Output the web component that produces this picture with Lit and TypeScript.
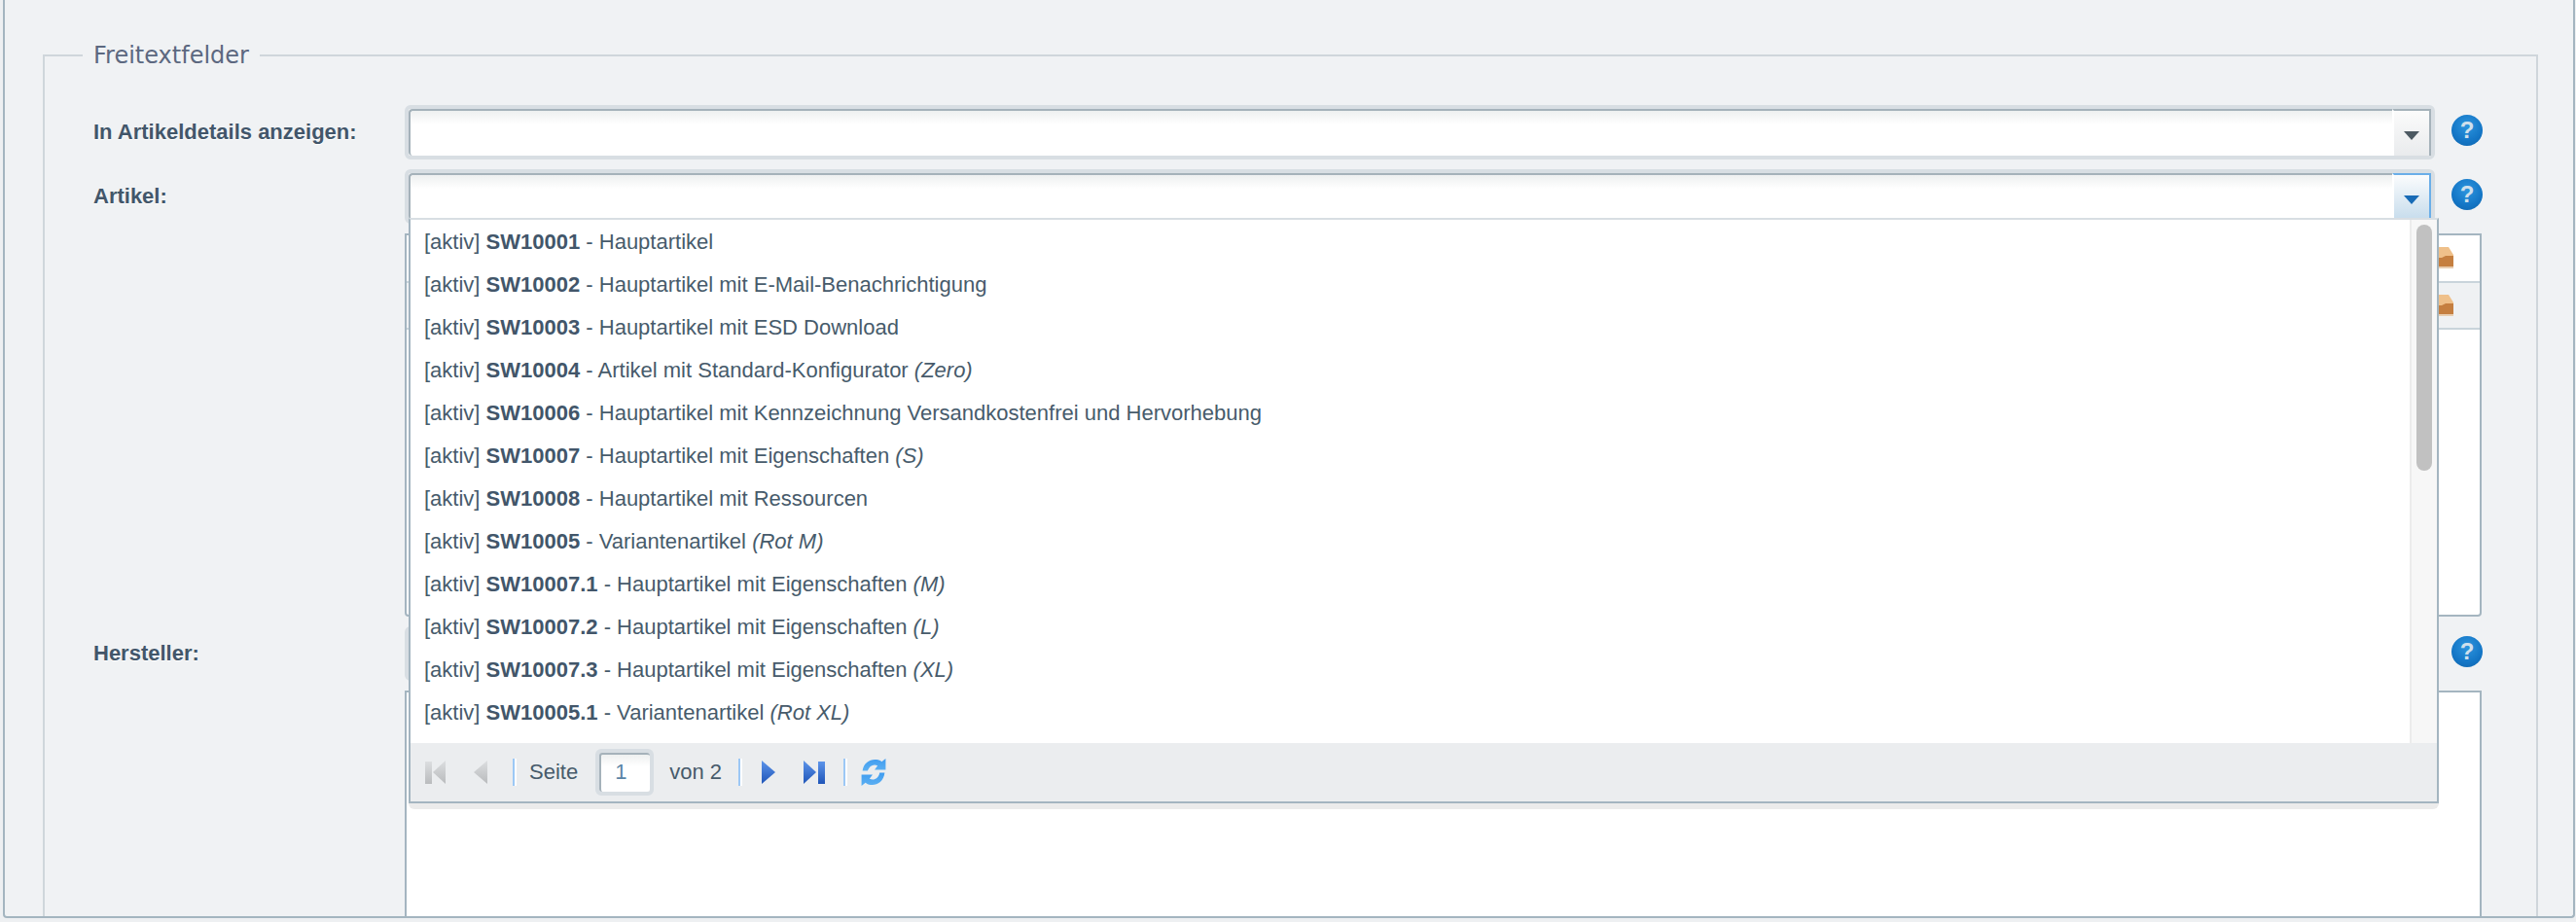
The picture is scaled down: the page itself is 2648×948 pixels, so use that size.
import { LitElement, html, css, svg } from "lit";
import { customElement } from "lit/decorators.js";

const items: [string, string, string?][] = [
  ["SW10001", "Hauptartikel"],
  ["SW10002", "Hauptartikel mit E-Mail-Benachrichtigung"],
  ["SW10003", "Hauptartikel mit ESD Download"],
  ["SW10004", "Artikel mit Standard-Konfigurator", "(Zero)"],
  ["SW10006", "Hauptartikel mit Kennzeichnung Versandkostenfrei und Hervorhebung"],
  ["SW10007", "Hauptartikel mit Eigenschaften", "(S)"],
  ["SW10008", "Hauptartikel mit Ressourcen"],
  ["SW10005", "Variantenartikel", "(Rot M)"],
  ["SW10007.1", "Hauptartikel mit Eigenschaften", "(M)"],
  ["SW10007.2", "Hauptartikel mit Eigenschaften", "(L)"],
  ["SW10007.3", "Hauptartikel mit Eigenschaften", "(XL)"],
  ["SW10005.1", "Variantenartikel", "(Rot XL)"],
];

const defs = svg`<defs>
  <linearGradient id="grey" x1="0" x2="0" y1="0" y2="1"><stop offset="0" stop-color="#dcdee0"/><stop offset="1" stop-color="#b9bbbd"/></linearGradient>
  <linearGradient id="blue" x1="0" x2="0" y1="0" y2="1"><stop offset="0" stop-color="#5c94ea"/><stop offset="1" stop-color="#1f55b8"/></linearGradient>
  <linearGradient id="sky" x1="0" x2="0" y1="0" y2="1"><stop offset="0" stop-color="#3f9cf0"/><stop offset="1" stop-color="#5cb0f2"/></linearGradient>
</defs>`;

@customElement("app-root")
export class AppRoot extends LitElement {
  static styles = css`
    :host {
      display: block;
      width: 2648px;
      height: 948px;
      background: #eef0f2;
      font-family: "Liberation Sans", Arial, sans-serif;
      font-size: 22px;
      color: #475b6b;
      overflow: hidden;
    }
    .panel {
      box-sizing: border-box;
      margin-left: 3px;
      width: 2644px;
      height: 944px;
      border: 2px solid #a4b5c0;
      border-top: 0;
      border-radius: 0 0 4px 4px;
      background: #f0f2f4;
      overflow: hidden;
    }
    fieldset {
      margin: 42px 36px 0 39px;
      padding: 36px 0 0 50px;
      border: 2px solid #cfd6db;
      min-width: 0;
    }
    legend {
      margin-left: -11px;
      padding: 0 11px;
      height: 30px;
      line-height: 30px;
      font-family: "DejaVu Sans", sans-serif;
      font-size: 24px;
      color: #5c6880;
    }
    .form {
      display: flex;
      flex-direction: column;
      gap: 10px;
    }
    .row {
      display: grid;
      grid-template-columns: 320px 2087px 32px;
      column-gap: 0;
      align-items: center;
    }
    .row label {
      font-weight: bold;
      color: #42566a;
      text-shadow: 0 1px 0 #fff;
      font-size: 22px;
    }
    .help {
      grid-column: 3;
      margin: 0 0 4px 17px;
      width: 32px;
      height: 32px;
      border-radius: 50%;
      background: radial-gradient(circle at 50% 35%, #2c95de 0%, #1476c6 60%, #0f64aa 100%);
      color: #cfe0ec;
      font-weight: bold;
      font-size: 24px;
      line-height: 32px;
      text-align: center;
    }
    .combo-wrap {
      position: relative;
      grid-column: 2;
    }
    .combo {
      box-sizing: border-box;
      height: 56px;
      border: 4px solid #d8dee3;
      border-radius: 6px;
      display: flex;
      background: #fff;
    }
    .combo .inner {
      flex: 1;
      border-top: 2px solid #a5b2ba;
      border-left: 2px solid #a5b2ba;
      border-radius: 4px 0 0 4px;
      background: linear-gradient(#eef0f0, #fff 14px);
    }
    .trigger {
      box-sizing: border-box;
      width: 40px;
      border-left: 2px solid #fff;
      border-top: 2px solid #a5b2ba;
      border-right: 2px solid #a5b2ba;
      background: linear-gradient(#fbfbfb, #e9ebed);
      display: flex;
      align-items: center;
      justify-content: center;
    }
    .trigger.active {
      border-top-color: #6aaee8;
      border-right-color: #6aaee8;
      background: linear-gradient(#fbfcfd, #c6dcec);
    }
    .arrow {
      width: 0;
      height: 0;
      border-left: 8px solid transparent;
      border-right: 8px solid transparent;
      border-top: 9px solid #4d5a63;
      margin-top: 4px;
    }
    .active .arrow {
      border-top-color: #186bb6;
    }
    .grid {
      grid-column: 2 / 4;
      box-sizing: border-box;
      border: 2px solid #a4b5c0;
      background: #fff;
      width: 2135px;
    }
    .grid.first {
      height: 394px;
      border-radius: 0 0 4px 4px;
    }
    .grid.second {
      height: 300px;
    }
    .grow {
      box-sizing: border-box;
      height: 49px;
      border-bottom: 2px solid #c9d4db;
      display: flex;
      align-items: center;
      justify-content: flex-end;
      padding-right: 27px;
    }
    .grow.alt {
      background: #eff1f3;
      height: 48px;
    }
    .drop {
      position: absolute;
      left: 4px;
      top: 50px;
      box-sizing: border-box;
      width: 2087px;
      height: 602px;
      border: 2px solid #a4b5c0;
      border-top: 2px solid #d8dee3;
      background: #fff;
      display: flex;
      flex-direction: column;
      z-index: 5;
    }
    .drop::after {
      content: "";
      position: absolute;
      left: -2px;
      right: -2px;
      bottom: -8px;
      height: 6px;
      background: #ebebeb;
      border-radius: 0 0 8px 8px;
    }
    .body {
      flex: 1;
      display: flex;
      min-height: 0;
    }
    .list {
      flex: 1;
      padding-top: 1px;
    }
    .item {
      height: 44px;
      line-height: 44px;
      padding-left: 14px;
      white-space: nowrap;
    }
    .item b { color: #42566a; }
    .bar {
      box-sizing: border-box;
      width: 28px;
      background: #f7f7f7;
      border-left: 2px solid #ececec;
      padding: 5px 5px 0 5px;
    }
    .thumb {
      width: 16px;
      height: 253px;
      border-radius: 8px;
      background: #c1c1c1;
    }
    .pager {
      box-sizing: border-box;
      height: 60px;
      background: #ebedef;
      display: flex;
      align-items: center;
      padding-left: 15px;
    }
    .pager svg { display: block; flex: none; }
    .sep {
      width: 2px;
      height: 28px;
      background: #9cc8f5;
      border-right: 2px solid #fff;
      flex: none;
    }
    .page {
      box-sizing: border-box;
      width: 60px;
      height: 48px;
      margin: 0 16px 0 18px;
      border: 4px solid #d8dee3;
      border-radius: 6px;
    }
    .page div {
      box-sizing: border-box;
      height: 100%;
      border-top: 2px solid #a5b2ba;
      border-left: 2px solid #a5b2ba;
      border-radius: 3px;
      background: linear-gradient(#eef0f0, #fff 12px);
      color: #5a84a6;
      padding-left: 14px;
      line-height: 36px;
    }
  `;

  private icon(w: number, h: number, body: unknown, ml: number, vb?: string) {
    return html`<svg style="margin-left:${ml}px" width=${w} height=${h} viewBox=${vb ?? `0 0 ${w} ${h}`}>${defs}${body}</svg>`;
  }

  private box() {
    return html`<svg width="28" height="23" viewBox="0 0 28 23">
      <path d="M4 12 L10 0 H23 L28 8 V12 Z" fill="#efc08a" />
      <path d="M0 20 V11 H16 L20 9 H28 V20 Z" fill="#c57f40" />
      <rect x="0" y="20" width="28" height="2" fill="#e8cdb0" />
    </svg>`;
  }

  private combo(active = false) {
    return html`<div class="combo">
      <div class="inner"></div>
      <div class="trigger ${active ? "active" : ""}"><div class="arrow"></div></div>
    </div>`;
  }

  private help() {
    return html`<div class="help">?</div>`;
  }

  render() {
    return html`<div class="panel">
      <fieldset>
        <legend>Freitextfelder</legend>
        <div class="form">
          <div class="row">
            <label>In Artikeldetails anzeigen:</label>
            <div class="combo-wrap">${this.combo()}</div>
            ${this.help()}
          </div>
          <div class="row">
            <label>Artikel:</label>
            <div class="combo-wrap">
              ${this.combo(true)}
              <div class="drop">
                <div class="body">
                  <div class="list">
                    ${items.map(
                      ([sku, name, opt]) => html`<div class="item">[aktiv] <b>${sku}</b> - ${name}${opt ? html` <i>${opt}</i>` : ""}</div>`
                    )}
                  </div>
                  <div class="bar"><div class="thumb"></div></div>
                </div>
                <div class="pager">
                  ${this.icon(22, 24, svg`<rect x="0" y="1" width="7" height="23" fill="url(#grey)"/><path d="M21 0 V24 L8 12 Z" fill="url(#grey)"/>`, 0)}
                  ${this.icon(14, 24, svg`<path d="M14 0 V24 L0 12 Z" fill="url(#grey)"/>`, 28)}
                  <span class="sep" style="margin-left:26px"></span>
                  <span style="margin-left:13px">Seite</span>
                  <div class="page"><div>1</div></div>
                  <span>von 2</span>
                  <span class="sep" style="margin-left:17px"></span>
                  ${this.icon(14, 24, svg`<path d="M0 0 V24 L14 12 Z" fill="url(#blue)"/>`, 20)}
                  ${this.icon(22, 24, svg`<path d="M0 0 V24 L13 12 Z" fill="url(#blue)"/><rect x="15" y="1" width="7" height="23" fill="url(#blue)"/>`, 29)}
                  <span class="sep" style="margin-left:19px"></span>
                  ${this.icon(30, 30, svg`
                    <path d="M4 14 C5 6 12 2 18 3 C20 3 22 4 23 5 L27 2 V13 H16 L19 9 C15 7 11 9 9 14 Z" fill="url(#sky)"/>
                    <path d="M26 16 C25 25 18 29 12 28 C10 28 8 27 7 26 L3 29 V18 H14 L11 22 C15 24 20 22 21 16 Z" fill="url(#sky)"/>`, 12, "2 1 26 29")}
                </div>
              </div>
            </div>
            ${this.help()}
          </div>
          <div class="row">
            <div class="grid first">
              <div class="grow">${this.box()}</div>
              <div class="grow alt">${this.box()}</div>
            </div>
          </div>
          <div class="row">
            <label>Hersteller:</label>
            <div class="combo-wrap">${this.combo()}</div>
            ${this.help()}
          </div>
          <div class="row">
            <div class="grid second"></div>
          </div>
        </div>
      </fieldset>
    </div>`;
  }
}
